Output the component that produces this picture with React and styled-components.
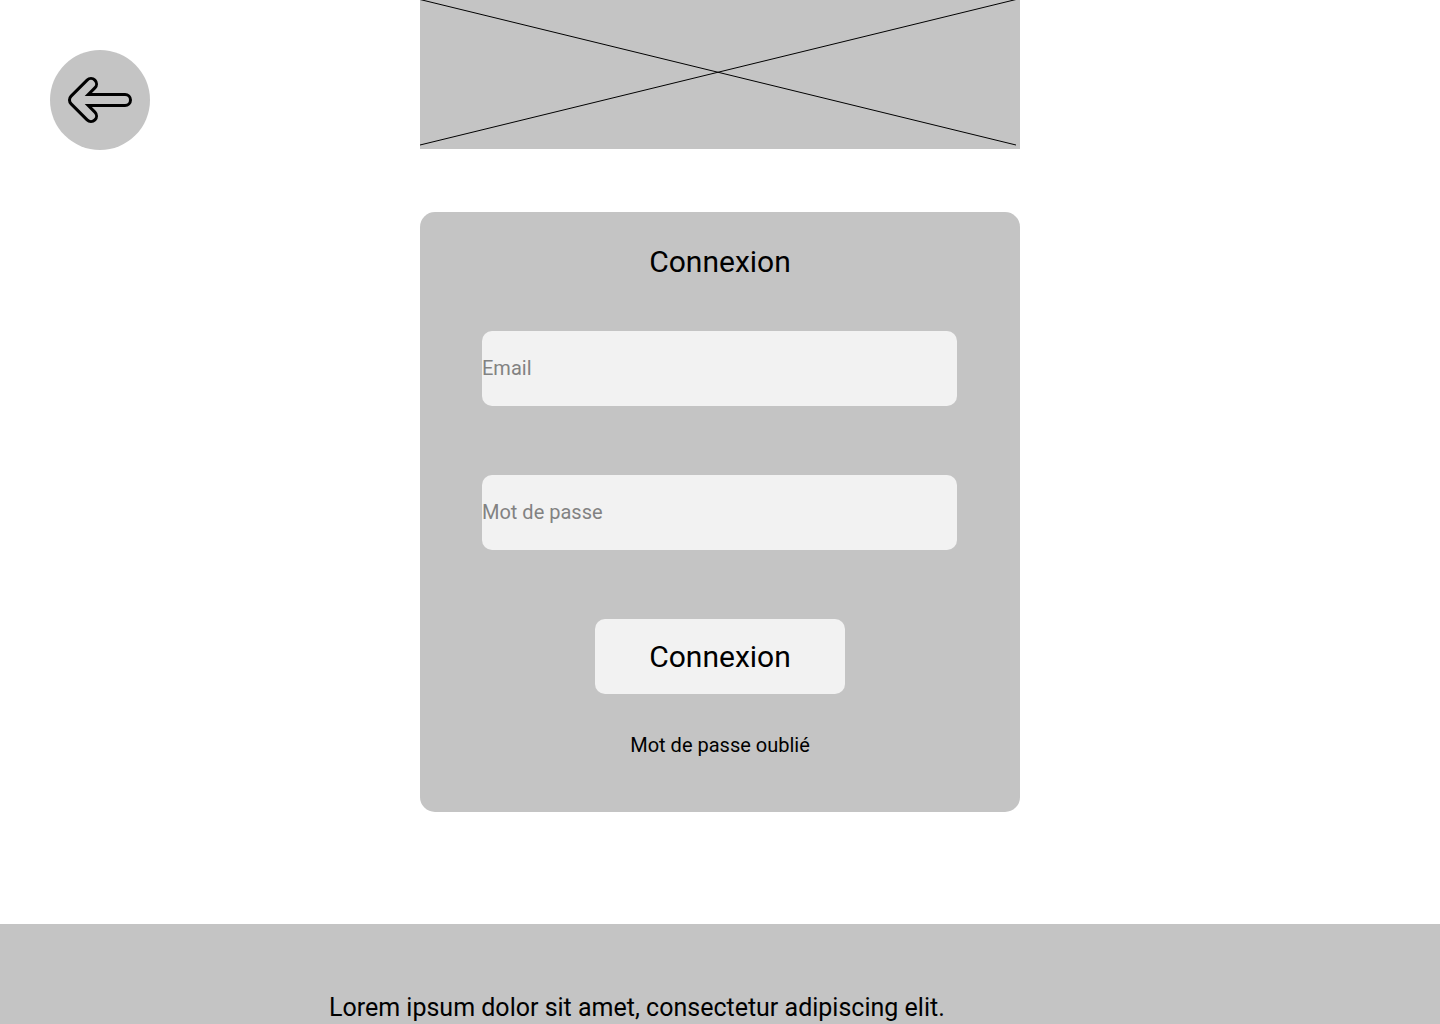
import React from "react";
import styled, { createGlobalStyle } from "styled-components";

const GlobalStyle = createGlobalStyle`
  *, *::before, *::after { box-sizing: border-box; }
  body {
    margin: 0;
    background: #ffffff;
    color: #000000;
    font-family: Roboto, "Liberation Sans", sans-serif;
  }
`;

const Page = styled.div`
  display: flex;
  flex-direction: column;
  min-height: 100vh;
`;

const Header = styled.header`
  display: grid;
  grid-template-columns: 1fr minmax(0, 600px) 1fr;
  align-items: start;
`;

const BackButton = styled.button`
  width: 100px;
  height: 100px;
  margin: 50px 0 0 50px;
  padding: 0;
  border: 0;
  border-radius: 50%;
  background: #c4c4c4;
  cursor: pointer;

  svg {
    display: block;
  }
`;

const Banner = styled.div`
  height: 149px;
  background: #c4c4c4;

  svg {
    display: block;
    width: 100%;
    height: 100%;
  }
`;

const Main = styled.main`
  display: flex;
  justify-content: center;
  padding: 62px 0 112px;
`;

const Card = styled.form`
  display: flex;
  flex-direction: column;
  align-items: center;
  width: 100%;
  max-width: 600px;
  padding: 32px 62px 55px;
  border-radius: 15px;
  background: #c4c4c4;
`;

const Title = styled.h1`
  margin: 0 0 51px;
  font-size: 30px;
  font-weight: 400;
  line-height: 36px;
`;

const Fields = styled.div`
  display: flex;
  flex-direction: column;
  gap: 69px;
  width: 100%;
  margin-bottom: 69px;
`;

const Input = styled.input`
  width: 100%;
  max-width: 475px;
  height: 75px;
  padding: 0 0 2px;
  border: 0;
  border-radius: 10px;
  background: #f2f2f2;
  color: #000000;
  font: inherit;
  font-size: 20px;

  &::placeholder {
    color: #828282;
    opacity: 1;
  }
`;

const SubmitButton = styled.button`
  width: 250px;
  height: 75px;
  margin-bottom: 39px;
  padding: 0;
  border: 0;
  border-radius: 10px;
  background: #f2f2f2;
  color: #000000;
  font: inherit;
  font-size: 30px;
  cursor: pointer;
`;

const ForgotLink = styled.a`
  color: #000000;
  font-size: 20px;
  line-height: 24px;
  text-decoration: none;
`;

const Footer = styled.footer`
  flex: 1;
  padding-top: 69px;
  background: #c4c4c4;
`;

const FooterText = styled.p`
  max-width: 782px;
  margin: 0 auto;
  font-size: 25px;
  line-height: 30px;
`;

function ArrowIcon() {
  return (
    <svg width="100" height="100" viewBox="0 0 100 100" fill="none" aria-hidden="true">
      <path
        d="M38.3 44.5H75a5.5 5.5 0 0 1 0 11H38.3L44.9 62.1a5.5 5.5 0 0 1-7.8 7.8L21.1 53.9a5.5 5.5 0 0 1 0-7.8L37.1 30.1a5.5 5.5 0 0 1 7.8 7.8Z"
        stroke="#000000"
        strokeWidth="3"
      />
    </svg>
  );
}

function Field({ id, label, type, autoComplete }) {
  return (
    <Input
      id={id}
      name={id}
      type={type}
      aria-label={label}
      placeholder={label}
      autoComplete={autoComplete}
    />
  );
}

export default function App() {
  return (
    <>
      <GlobalStyle />
      <Page>
        <Header>
          <BackButton type="button" aria-label="Retour">
            <ArrowIcon />
          </BackButton>
          <Banner>
            <svg viewBox="0 0 600 149" preserveAspectRatio="none" stroke="#000000" aria-hidden="true">
              <path d="M0 -0.5L596 145M0 145L596 -0.5" />
            </svg>
          </Banner>
        </Header>
        <Main>
          <Card onSubmit={(event) => event.preventDefault()}>
            <Title>Connexion</Title>
            <Fields>
              <Field id="email" label="Email" type="email" autoComplete="email" />
              <Field id="password" label="Mot de passe" type="password" autoComplete="current-password" />
            </Fields>
            <SubmitButton type="submit">Connexion</SubmitButton>
            <ForgotLink href="#mot-de-passe">Mot de passe oublié</ForgotLink>
          </Card>
        </Main>
        <Footer>
          <FooterText>Lorem ipsum dolor sit amet, consectetur adipiscing elit.</FooterText>
        </Footer>
      </Page>
    </>
  );
}
